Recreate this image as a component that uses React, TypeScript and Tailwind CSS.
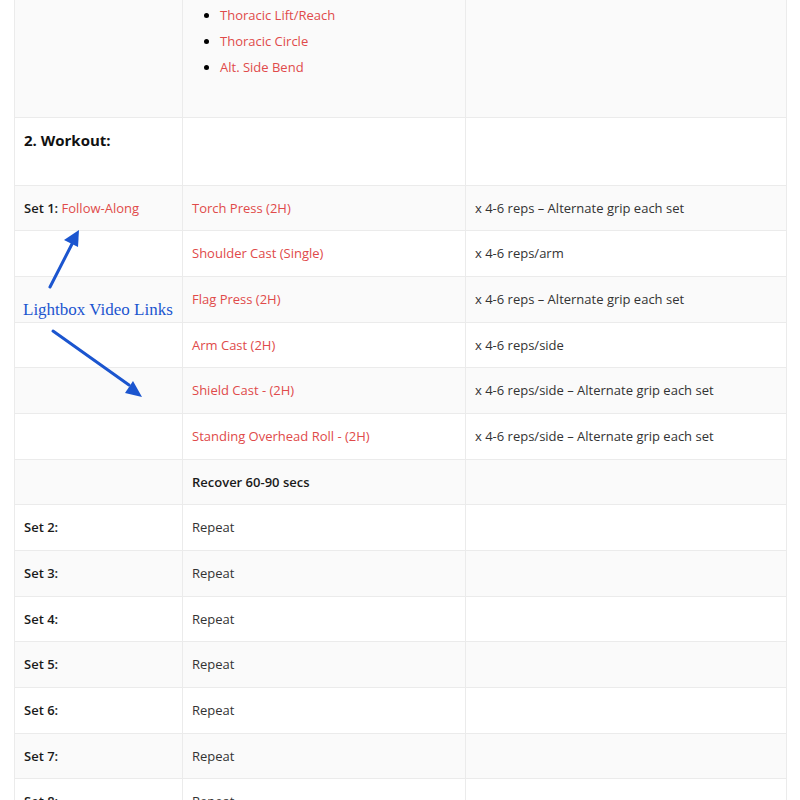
type Row = {
    label?: string;
    labelLink?: string;
    move?: string;
    moveLink?: boolean;
    moveBold?: boolean;
    note?: string;
};

const rows: Row[] = [
    { label: "Set 1:", labelLink: "Follow-Along", move: "Torch Press (2H)", moveLink: true, note: "x 4-6 reps – Alternate grip each set" },
    { move: "Shoulder Cast (Single)", moveLink: true, note: "x 4-6 reps/arm" },
    { move: "Flag Press (2H)", moveLink: true, note: "x 4-6 reps – Alternate grip each set" },
    { move: "Arm Cast (2H)", moveLink: true, note: "x 4-6 reps/side" },
    { move: "Shield Cast - (2H)", moveLink: true, note: "x 4-6 reps/side – Alternate grip each set" },
    { move: "Standing Overhead Roll - (2H)", moveLink: true, note: "x 4-6 reps/side – Alternate grip each set" },
    { move: "Recover 60-90 secs", moveBold: true },
    { label: "Set 2:", move: "Repeat" },
    { label: "Set 3:", move: "Repeat" },
    { label: "Set 4:", move: "Repeat" },
    { label: "Set 5:", move: "Repeat" },
    { label: "Set 6:", move: "Repeat" },
    { label: "Set 7:", move: "Repeat" },
    { label: "Set 8:", move: "Repeat" },
];

const warmup = ["Thoracic Lift/Reach", "Thoracic Circle", "Alt. Side Bend"];

const base = "border border-[#ebebeb] align-top px-[9px] pb-[10.1px] leading-[23.6px]";
const cell = `${base} pt-[11px]`;
const topCell = `${base} border-t-0 pt-[2px]`;

function Arrows() {
    // annotation drawn over the first column (coords relative to table's left edge)
    return (
        <svg
            className="absolute left-0 top-0 pointer-events-none"
            width="200"
            height="420"
            viewBox="0 0 200 420"
        >
            <line x1="36" y1="287" x2="58" y2="244" stroke="#1b55cf" strokeWidth="3" strokeLinecap="round" />
            <polygon points="65,230 50,240 64,247" fill="#1b55cf" />
            <line x1="39" y1="331" x2="115" y2="385" stroke="#1b55cf" strokeWidth="3" strokeLinecap="round" />
            <polygon points="128,397 111,393 119,381" fill="#1b55cf" />
        </svg>
    );
}

export default function App() {
    return (
        <div
            className="bg-white min-h-[800px] px-[14px] text-[13px] text-[#333]"
            style={{ fontFamily: '"Open Sans", "Liberation Sans", sans-serif' }}
        >
            <div className="relative">
                <table className="w-[772px] border-collapse table-fixed">
                    <colgroup>
                        <col className="w-[168px]" />
                        <col className="w-[283px]" />
                        <col className="w-[321px]" />
                    </colgroup>
                    <tbody>
                        <tr className="bg-[#fafafa] h-[117px]">
                            <td className={topCell}></td>
                            <td className={topCell}>
                                <ul className="list-disc pl-[28px] leading-[26px] marker:text-black">
                                    {warmup.map((w) => (
                                        <li key={w} className="text-[#e04a4a]">
                                            {w}
                                        </li>
                                    ))}
                                </ul>
                            </td>
                            <td className={topCell}></td>
                        </tr>
                        <tr className="bg-white h-[68px]">
                            <td className={cell}>
                                <span className="text-[15px] font-bold text-[#111]">2. Workout:</span>
                            </td>
                            <td className={cell}></td>
                            <td className={cell}></td>
                        </tr>
                        {rows.map((r, i) => (
                            <tr key={i} className={i % 2 === 0 ? "bg-[#fafafa]" : "bg-white"}>
                                <td className={cell}>
                                    {r.label && (
                                        <span className="font-semibold text-[#1a1a1a]">{r.label}</span>
                                    )}
                                    {r.labelLink && (
                                        <span className="text-[#e04a4a]"> {r.labelLink}</span>
                                    )}
                                </td>
                                <td className={cell}>
                                    <span
                                        className={
                                            r.moveLink
                                                ? "text-[#e04a4a]"
                                                : r.moveBold
                                                  ? "font-semibold text-[#1a1a1a]"
                                                  : "text-[#333]"
                                        }
                                    >
                                        {r.move}
                                    </span>
                                </td>
                                <td className={cell}>{r.note}</td>
                            </tr>
                        ))}
                    </tbody>
                </table>
                <Arrows />
                <div
                    className="absolute left-[9px] top-[301px] text-[17px] text-[#1b55cf] leading-none"
                    style={{ fontFamily: '"Liberation Serif", serif' }}
                >
                    Lightbox Video Links
                </div>
            </div>
        </div>
    );
}
